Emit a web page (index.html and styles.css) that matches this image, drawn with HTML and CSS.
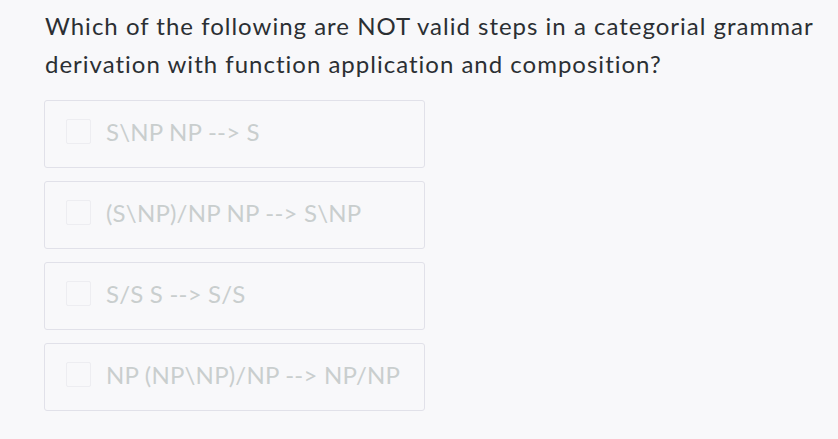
FILE: index.html
```html
<!DOCTYPE html>
<html>
<head>
<meta charset="utf-8">
<link rel="stylesheet" href="styles.css">
</head>
<body>
<div class="question">
  <p class="prompt">Which of the following are NOT valid steps in a categorial grammar derivation with function application and composition?</p>
  <div class="options">
    <label class="option"><span class="box"></span><span class="label">S\NP NP --&gt; S</span></label>
    <label class="option"><span class="box"></span><span class="label">(S\NP)/NP NP --&gt; S\NP</span></label>
    <label class="option"><span class="box"></span><span class="label">S/S S --&gt; S/S</span></label>
    <label class="option"><span class="box"></span><span class="label">NP (NP\NP)/NP --&gt; NP/NP</span></label>
  </div>
</div>
</body>
</html>
```
FILE: styles.css
```css
html, body {
  margin: 0;
  padding: 0;
  background: #f8f8fa;
}
body {
  font-family: Lato, "Noto Sans", sans-serif;
  width: 838px;
  height: 439px;
  overflow: hidden;
}
.question {
  padding: 7px 0 0 45px;
}
.prompt {
  margin: 0;
  font-size: 24px;
  line-height: 38px;
  letter-spacing: 1px;
  color: #2b2f33;
  width: 790px;
}
.options {
  margin-top: 17px;
  display: flex;
  flex-direction: column;
  gap: 13px;
  width: 381px;
  margin-left: -1px;
}
.option {
  display: flex;
  align-items: center;
  height: 68px;
  box-sizing: border-box;
  border: 1px solid #e1e1e9;
  border-radius: 3px;
  padding: 0 0 6px 21px;
}
.box {
  width: 25px;
  height: 25px;
  box-sizing: border-box;
  border: 1px solid #ededf1;
  border-radius: 2px;
  margin-right: 15px;
}
.label {
  font-size: 24px;
  line-height: 29px;
  letter-spacing: 0.2px;
  color: #c9cece;
}
```
